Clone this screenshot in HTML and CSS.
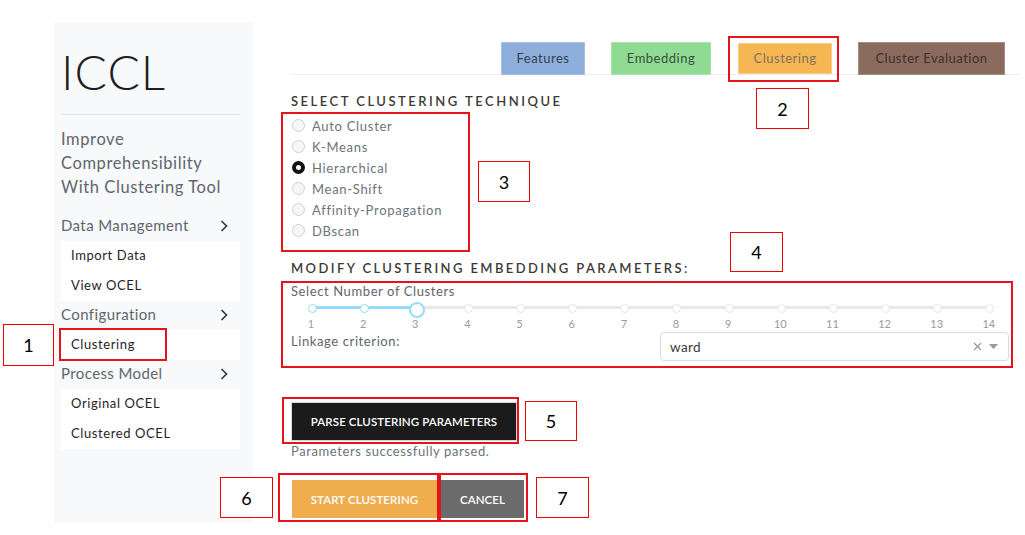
FILE: index.html
```html
<!DOCTYPE html>
<html lang="en">
<head>
<meta charset="utf-8">
<title>ICCL</title>
<link rel="stylesheet" href="styles.css">
</head>
<body>
<div class="page">
  <aside class="sidebar">
    <h1 class="brand">ICCL</h1>
    <hr class="rule">
    <p class="tagline">Improve Comprehensibility With Clustering Tool</p>
    <nav class="nav">
      <div class="nav-head"><span>Data Management</span><svg class="chev" width="8" height="12" viewBox="0 0 8 12"><path d="M1.5 1 L6.5 6 L1.5 11" fill="none" stroke="#333" stroke-width="1.6"/></svg></div>
      <ul class="nav-sub"><li>Import Data</li><li>View OCEL</li></ul>
      <div class="nav-head"><span>Configuration</span><svg class="chev" width="8" height="12" viewBox="0 0 8 12"><path d="M1.5 1 L6.5 6 L1.5 11" fill="none" stroke="#333" stroke-width="1.6"/></svg></div>
      <ul class="nav-sub"><li>Clustering</li></ul>
      <div class="nav-head"><span>Process Model</span><svg class="chev" width="8" height="12" viewBox="0 0 8 12"><path d="M1.5 1 L6.5 6 L1.5 11" fill="none" stroke="#333" stroke-width="1.6"/></svg></div>
      <ul class="nav-sub"><li>Original OCEL</li><li>Clustered OCEL</li></ul>
    </nav>
  </aside>
  <main class="main">
    <div class="tabs">
      <span class="tab tab-features">Features</span>
      <span class="tab tab-embedding">Embedding</span>
      <span class="tab tab-clustering">Clustering</span>
      <span class="tab tab-eval">Cluster Evaluation</span>
    </div>
    <h2 class="section-title">Select Clustering Technique</h2>
    <div class="radios">
      <div class="radio"><span class="dot"></span>Auto Cluster</div>
      <div class="radio"><span class="dot"></span>K-Means</div>
      <div class="radio"><span class="dot on"></span>Hierarchical</div>
      <div class="radio"><span class="dot"></span>Mean-Shift</div>
      <div class="radio"><span class="dot"></span>Affinity-Propagation</div>
      <div class="radio"><span class="dot"></span>DBscan</div>
    </div>
    <h2 class="section-title title-2">Modify Clustering Embedding Parameters:</h2>
    <div class="params">
      <div class="field-label">Select Number of Clusters</div>
      <div class="slider">
        <div class="track"><div class="fill" style="width:15.385%"></div></div>
        <div class="ticks">
          <span class="tick active"></span><span class="tick active"></span><span class="tick handle"></span><span class="tick"></span><span class="tick"></span><span class="tick"></span><span class="tick"></span><span class="tick"></span><span class="tick"></span><span class="tick"></span><span class="tick"></span><span class="tick"></span><span class="tick"></span><span class="tick"></span>
        </div>
        <div class="marks">
          <span>1</span><span>2</span><span>3</span><span>4</span><span>5</span><span>6</span><span>7</span><span>8</span><span>9</span><span>10</span><span>11</span><span>12</span><span>13</span><span>14</span>
        </div>
      </div>
      <div class="linkage-row">
        <span class="field-label">Linkage criterion:</span>
        <div class="select">
          <span class="select-value">ward</span>
          <svg class="clear" width="9" height="9" viewBox="0 0 9 9"><path d="M1 1 L8 8 M8 1 L1 8" stroke="#999" stroke-width="1.2"/></svg>
          <svg class="caret" width="9" height="5" viewBox="0 0 9 5"><path d="M0 0 H9 L4.5 5 Z" fill="#999"/></svg>
        </div>
      </div>
    </div>
    <button class="btn btn-dark">Parse Clustering Parameters</button>
    <p class="status">Parameters successfully parsed.</p>
    <div class="actions">
      <button class="btn btn-orange">Start Clustering</button>
      <button class="btn btn-gray">Cancel</button>
    </div>
  </main>
</div>

<div class="annotations">
  <div class="mark-box" style="left:59px;top:328px;width:108px;height:33px"></div>
  <div class="mark-label" style="left:3px;top:324px;width:51px;height:42px">1</div>
  <div class="mark-box" style="left:728px;top:36px;width:111px;height:46px"></div>
  <div class="mark-label" style="left:756px;top:88px;width:53px;height:41px">2</div>
  <div class="mark-box" style="left:281px;top:112px;width:189px;height:140px"></div>
  <div class="mark-label" style="left:478px;top:161px;width:52px;height:41px">3</div>
  <div class="mark-box" style="left:281px;top:281px;width:732px;height:87px"></div>
  <div class="mark-label" style="left:730px;top:232px;width:53px;height:40px">4</div>
  <div class="mark-box" style="left:282px;top:397px;width:237px;height:47px"></div>
  <div class="mark-label" style="left:525px;top:401px;width:52px;height:40px">5</div>
  <div class="mark-box" style="left:278px;top:473px;width:161px;height:49px"></div>
  <div class="mark-box" style="left:439px;top:473px;width:89px;height:49px"></div>
  <div class="mark-label" style="left:220px;top:477px;width:53px;height:41px">6</div>
  <div class="mark-label" style="left:536px;top:477px;width:53px;height:41px">7</div>
</div>
</body>
</html>
```

FILE: styles.css
```css
* { box-sizing: border-box; }
html, body { margin: 0; padding: 0; background: #fff; }
body {
  font-family: Lato, "Open Sans", Arial, sans-serif;
  color: #343a40;
  width: 1025px;
  height: 535px;
  overflow: hidden;
  position: relative;
}
.page {
  display: flex;
  align-items: flex-start;
  padding: 22px 0 0 54px;
}
/* Sidebar */
.sidebar {
  width: 199px;
  height: 501px;
  background: #f8f9fa;
  padding: 21px 13px 0 7px;
}
.brand {
  margin: 0;
  font-size: 48px;
  line-height: 58px;
  font-weight: 300;
  color: #1e1e1e;
  letter-spacing: 1px;
}
.rule {
  margin: 13px 0 0;
  border: 0;
  border-top: 1px solid #dde0e3;
}
.tagline {
  margin: 12px 0 0;
  font-size: 16.5px;
  line-height: 24px;
  color: #5f666d;
  letter-spacing: 0.6px;
}
.nav { margin-top: 13px; }
.nav-head {
  display: flex;
  align-items: center;
  justify-content: space-between;
  height: 29px;
  padding: 0 12px 3px 0;
  font-size: 15px;
  color: #5f666d;
  letter-spacing: 0.4px;
}
.chev { margin-top: 2px; }
.nav-sub {
  list-style: none;
  margin: 0;
  padding: 0;
  background: #fff;
}
.nav-sub li {
  height: 30px;
  line-height: 29px;
  padding-left: 10px;
  font-size: 13px;
  font-weight: 400;
  color: #1f2327;
  letter-spacing: 0.6px;
}
/* Main */
.main {
  width: 729px;
  margin-left: 38px;
  padding-top: 20px;
}
.tabs {
  display: flex;
  justify-content: flex-end;
  gap: 26px;
  padding-right: 15px;
  border-bottom: 1px solid #eeeeee;
  height: 33px;
}
.tab {
  height: 33px;
  line-height: 31px;
  padding: 0 14px;
  font-size: 13px;
  letter-spacing: 0.5px;
  border: 1px solid transparent;
}
.tab-features { background: #8eaedb; border-color: #a7c0e4; color: #34404e; width: 84px; text-align: center; }
.tab-embedding { background: #8fdb93; border-color: #a8e4ab; color: #3c4e3c; width: 100px; text-align: center; margin-right: 1px; }
.tab-clustering { background: #f6b652; border-color: #f8cd86; color: #7f7260; width: 94px; text-align: center; height: 31px; line-height: 29px; margin-top: 1px; }
.tab-eval { background: #8b6b5e; border-color: #a68c82; color: #3b302c; width: 147px; text-align: center; }
.section-title {
  margin: 17px 0 0;
  font-size: 13px;
  line-height: 18px;
  font-weight: 600;
  text-transform: uppercase;
  letter-spacing: 2.5px;
  color: #3c3a38;
}
.title-2 { margin-top: 18px; letter-spacing: 2.4px; }
.radios { margin-top: 5px; }
.radio {
  display: flex;
  align-items: center;
  height: 21px;
  font-size: 13px;
  color: #6c737a;
  letter-spacing: 0.7px;
}
.dot {
  width: 13px;
  height: 13px;
  border-radius: 50%;
  border: 1px solid #cfd2d4;
  background: #f6f6f6;
  margin: 0 7px 0 1px;
  flex: none;
}
.dot.on { border: 4px solid #111; background: #fff; }
.params { margin-top: 5px; padding-right: 11px; }
.field-label {
  font-size: 13px;
  line-height: 18px;
  color: #5f666d;
  letter-spacing: 0.6px;
}
.slider {
  position: relative;
  height: 32px;
  padding: 0 20px;
}
.track {
  position: absolute;
  left: 20px;
  right: 20px;
  top: 6px;
  height: 3px;
  background: #e9e9e9;
  border-radius: 2px;
}
.fill { height: 3px; background: #96dbfa; border-radius: 2px; }
.ticks {
  position: absolute;
  left: 10px;
  right: 10px;
  top: 0;
  height: 15px;
  display: flex;
  justify-content: space-between;
  align-items: center;
}
.tick {
  width: 20px;
  height: 15px;
  position: relative;
}
.tick::after {
  content: "";
  position: absolute;
  left: 6.5px;
  top: 4px;
  width: 7px;
  height: 7px;
  border-radius: 50%;
  background: #fff;
  border: 1.5px solid #e6e6e6;
}
.tick.active::after { border-color: #96dbfa; }
.tick.handle::after {
  left: 4px;
  top: 1.5px;
  width: 12px;
  height: 12px;
  border: 2px solid #96dbfa;
}
.marks {
  position: absolute;
  left: 10px;
  right: 10px;
  top: 17px;
  display: flex;
  justify-content: space-between;
}
.marks span {
  width: 20px;
  text-align: center;
  font-size: 11px;
  line-height: 13px;
  color: #9a9a9a;
}
.linkage-row {
  display: flex;
  justify-content: space-between;
  align-items: flex-start;
}
.select {
  width: 349px;
  height: 29px;
  border: 1px solid #dcdcdc;
  border-radius: 4px;
  display: flex;
  align-items: center;
  padding: 0 10px 0 9px;
  box-shadow: 0 0 1px rgba(0,0,0,0.05);
}
.select-value { flex: 1; font-size: 13.5px; color: #3b3b3b; letter-spacing: 0.4px; }
.clear { margin-right: 7px; }
.btn {
  display: block;
  border: 0;
  font-family: Lato, "Open Sans", Arial, sans-serif;
  font-size: 11.5px;
  font-weight: 600;
  text-transform: uppercase;
  color: #fff;
  letter-spacing: 0.1px;
  padding: 0;
}
.btn-dark {
  margin-top: 42px;
  margin-left: 1px;
  width: 224px;
  height: 37px;
  background: #1b1b1b;
  box-shadow: 0 0 0 1px #d6d6d6;
}
.status {
  margin: 2px 0 0;
  font-size: 13px;
  line-height: 18px;
  color: #6c737a;
  letter-spacing: 0.6px;
}
.actions {
  display: flex;
  gap: 4px;
  margin-top: 20px;
  margin-left: 1px;
}
.btn-orange { width: 145px; height: 38px; background: #f0ad4e; }
.btn-gray { width: 83px; height: 38px; background: #6b6b6b; }
/* Annotations */
.mark-box {
  position: absolute;
  border: 2px solid #e5131b;
}
.mark-label {
  position: absolute;
  border: 1px solid #f20000;
  background: #fff;
  display: flex;
  align-items: center;
  justify-content: center;
  font-family: Lato, "Liberation Sans", sans-serif;
  font-size: 18px;
  color: #000;
}
```
